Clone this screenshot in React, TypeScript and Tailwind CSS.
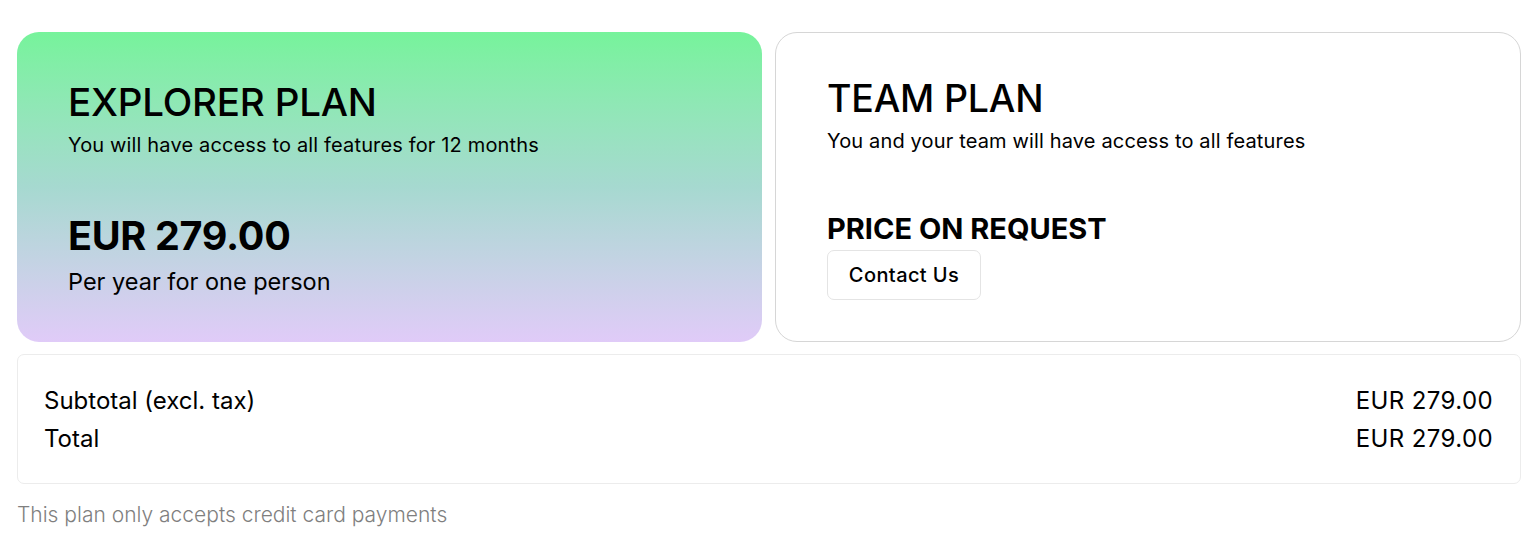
import React from "react";

export default function App() {
  return (
    <div className="min-h-[538px] bg-white pl-[17px] pr-[13px] pt-[32px] text-black" style={{ fontFamily: "Inter, 'Noto Sans', sans-serif" }}>
      <div className="flex gap-[13px]">
        <div className="flex h-[310px] w-[745px] flex-col rounded-[22px] bg-gradient-to-b from-[#76f39b] via-[#a6d9d0] to-[#e0cbf8] px-[51px] pt-[44px]">
          <h2 className="text-[38.5px] font-medium leading-[52px] tracking-[-0.2px]">EXPLORER PLAN</h2>
          <p className="mt-[4px] text-[20px] leading-[26px] tracking-[0.15px]">You will have access to all features for 12 months</p>
          <div className="mt-[54px] text-[39.5px] font-bold leading-[48px] tracking-[-0.3px]">EUR 279.00</div>
          <p className="mt-[7px] text-[23.5px] leading-[30px]">Per year for one person</p>
        </div>
        <div className="flex h-[310px] flex-1 flex-col rounded-[22px] border border-[#d6d6d6] bg-white px-[51px] pt-[40px]">
          <h2 className="text-[37.5px] font-medium leading-[52px] tracking-[-0.2px]">TEAM PLAN</h2>
          <p className="mt-[3px] text-[20px] leading-[26px] tracking-[0.15px]">You and your team will have access to all features</p>
          <div className="mt-[57px] text-[29px] font-bold leading-[36px]">PRICE ON REQUEST</div>
          <div className="mt-[3px]">
            <button className="h-[50px] w-[154px] rounded-[7px] border border-[#e4e4e4] bg-white text-[20px] font-medium tracking-[0.4px]">Contact Us</button>
          </div>
        </div>
      </div>
      <div className="mt-[12px] flex h-[130px] flex-col justify-center rounded-[7px] border border-[#ececec] pl-[26px] pr-[27px] pt-[2px]">
        <div className="flex justify-between text-[24px] leading-[38px]">
          <span>Subtotal (excl. tax)</span>
          <span className="tracking-[0.4px]">EUR 279.00</span>
        </div>
        <div className="flex justify-between text-[24px] leading-[38px]">
          <span>Total</span>
          <span className="tracking-[0.4px]">EUR 279.00</span>
        </div>
      </div>
      <p className="mt-[15px] text-[21px] font-light text-[#7f7f7f]">This plan only accepts credit card payments</p>
    </div>
  );
}
